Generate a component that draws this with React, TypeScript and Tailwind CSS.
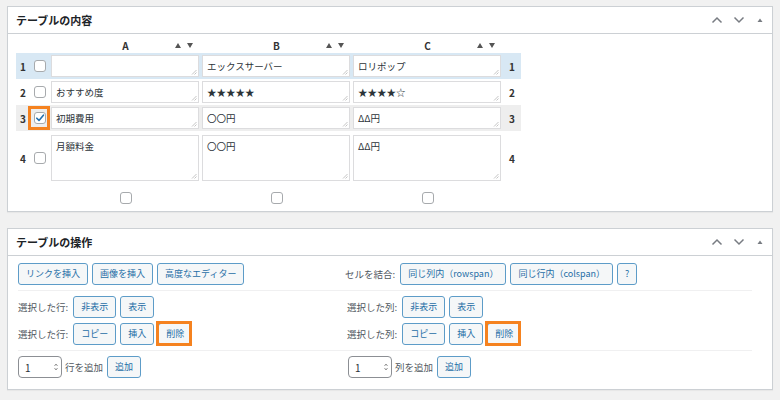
import React from "react";

const FONT = "font-['Noto_Sans_CJK_JP','Noto_Sans',sans-serif]";

function Box({ checked }: { checked?: boolean }) {
  return (
    <span className="w-[12px] h-[12px] rounded-[3px] border border-[#a7aaad] bg-white flex items-center justify-center shrink-0">
      {checked && (
        <svg width="10" height="10" viewBox="0 0 10 10">
          <path d="M1.8 5.2 L4 7.4 L8.4 2.2" fill="none" stroke="#2271b1" strokeWidth="1.6" strokeLinecap="round" strokeLinejoin="round" />
        </svg>
      )}
    </span>
  );
}

function Btn({ children }: { children: React.ReactNode }) {
  return (
    <span className="h-[22px] px-[7px] flex items-center border border-[#5d9cc8] rounded-[3px] bg-[#f5f7f8] text-[#1f6ea6] text-[9px] whitespace-nowrap shrink-0">
      {children}
    </span>
  );
}

// orange highlight drawn over the button
function Hot({ children }: { children: React.ReactNode }) {
  return (
    <span className="relative flex shrink-0">
      {children}
      <span className="absolute -left-[2px] -top-[2px] -bottom-[1px] right-0 border-[3px] border-[#f5821f]" />
    </span>
  );
}

function PanelHead({ title }: { title: string }) {
  return (
    <div className="h-[27px] border-b border-[#ccd0d4] flex items-center pl-[8px] pr-[8px]">
      <h2 className="text-[11px] font-semibold text-[#1d2327] flex-1">{title}</h2>
      <div className="flex items-center gap-[10px] text-[#787c82]">
        <svg width="12" height="8" viewBox="0 0 12 8">
          <path d="M1.5 6.5 L6 2 L10.5 6.5" fill="none" stroke="currentColor" strokeWidth="1.5" />
        </svg>
        <svg width="12" height="8" viewBox="0 0 12 8">
          <path d="M1.5 1.5 L6 6 L10.5 1.5" fill="none" stroke="currentColor" strokeWidth="1.5" />
        </svg>
        <svg width="8" height="8" viewBox="0 0 8 8" className="ml-[1px]">
          <path d="M1.5 6 L4 2.5 L6.5 6 Z" fill="currentColor" />
        </svg>
      </div>
    </div>
  );
}

function Sort() {
  return (
    <span className="flex items-center gap-[6px] pr-[8px] justify-self-end">
      <svg width="6" height="5" viewBox="0 0 6 5"><path d="M0 5 L3 0 L6 5 Z" fill="#555" /></svg>
      <svg width="6" height="5" viewBox="0 0 6 5"><path d="M0 0 L3 5 L6 0 Z" fill="#555" /></svg>
    </span>
  );
}

type Row = { n: number; cells: string[]; h: string; ta: string; band: string; checked?: boolean };

const rows: Row[] = [
  { n: 1, cells: ["", "エックスサーバー", "ロリポップ"], h: "h-[26px]", ta: "h-[22px]", band: "bg-[#d8e8f4]" },
  { n: 2, cells: ["おすすめ度", "★★★★★", "★★★★☆"], h: "h-[26px]", ta: "h-[22px]", band: "" },
  { n: 3, cells: ["初期費用", "〇〇円", "ΔΔ円"], h: "h-[26px]", ta: "h-[22px]", band: "bg-[#eeeeee]", checked: true },
  { n: 4, cells: ["月額料金", "〇〇円", "ΔΔ円"], h: "h-[54px]", ta: "h-[46px]", band: "" },
];

function Cell({ value, ta }: { value: string; ta: string }) {
  return (
    <div className="w-[151px] shrink-0">
      <div className={`relative ml-[1px] w-[148px] ${ta}`}>
        <textarea
          readOnly
          defaultValue={value}
          className="block w-full h-full resize-none border border-[#dcdcde] bg-white px-[4px] py-[3px] text-[9.5px] leading-[14px] text-[#2c3338] outline-none"
        />
        <svg width="6" height="6" viewBox="0 0 6 6" className="absolute right-[2px] bottom-[2px]">
          <path d="M1 5.5 L5.5 1 M3.5 5.5 L5.5 3.5" stroke="#b5b5b5" strokeWidth="0.8" />
        </svg>
      </div>
    </div>
  );
}

function ContentTable() {
  return (
    <div className="pl-[8px] pt-[3px]">
      <div className="flex h-[16px] items-center">
        <div className="w-[34px]" />
        {["A", "B", "C"].map((c) => (
          <div key={c} className="w-[151px] grid grid-cols-[1fr_auto_1fr] items-center">
            <span />
            <span className="text-[10px] font-bold text-[#333]">{c}</span>
            <Sort />
          </div>
        ))}
      </div>
      {rows.map((r) => (
        <div key={r.n} className={`flex items-center w-[505px] ${r.h} ${r.band}`}>
          <span className="w-[14px] text-center text-[10px] font-bold text-[#333]">{r.n}</span>
          <span className="relative w-[20px] flex justify-center">
            <Box checked={r.checked} />
            {r.checked && (
              <span className="absolute left-[-2px] top-[-6px] w-[22px] h-[24px] border-[3px] border-[#f5821f]" />
            )}
          </span>
          {r.cells.map((v, i) => (
            <Cell key={i} value={v} ta={r.ta} />
          ))}
          <span className="w-[18px] text-center text-[10px] font-bold text-[#333]">{r.n}</span>
        </div>
      ))}
      <div className="flex items-center h-[26px]">
        <div className="w-[34px]" />
        {[0, 1, 2].map((i) => (
          <div key={i} className="w-[151px] flex justify-center">
            <Box />
          </div>
        ))}
      </div>
    </div>
  );
}

function NumInput() {
  return (
    <span className="w-[44px] h-[22px] border border-[#8c8f94] rounded-[4px] bg-white flex items-center pl-[6px] pr-[3px] text-[10px] text-[#2c3338] shrink-0">
      <span className="flex-1">1</span>
      <svg width="4" height="8" viewBox="0 0 4 8">
        <path d="M0.5 3 L2 1 L3.5 3 M0.5 5 L2 7 L3.5 5" fill="none" stroke="#777" strokeWidth="0.8" />
      </svg>
    </span>
  );
}

function Label({ children }: { children: React.ReactNode }) {
  return <span className="text-[9.5px] text-[#50575e] mr-[1px] whitespace-nowrap">{children}</span>;
}

function Operations() {
  return (
    <div className="pl-[10px] pr-[20px] pt-[7px] pb-[11px] text-[9px]">
      <div className="grid grid-cols-[327px_1fr] border-b border-[#f0f0f1] pb-[5px]">
        <div className="flex gap-[4px]">
          <Btn>リンクを挿入</Btn>
          <Btn>画像を挿入</Btn>
          <Btn>高度なエディター</Btn>
        </div>
        <div className="flex items-center gap-[4px]">
          <Label>セルを結合:</Label>
          <Btn>同じ列内（rowspan）</Btn>
          <Btn>同じ行内（colspan）</Btn>
          <Btn>?</Btn>
        </div>
      </div>
      <div className="grid grid-cols-[327px_1fr] pt-[5px]">
        <div className="flex items-center gap-[4px]">
          <Label>選択した行:</Label>
          <Btn>非表示</Btn>
          <Btn>表示</Btn>
        </div>
        <div className="flex items-center gap-[4px] pl-[2px]">
          <Label>選択した列:</Label>
          <Btn>非表示</Btn>
          <Btn>表示</Btn>
        </div>
      </div>
      <div className="grid grid-cols-[327px_1fr] pt-[5px] border-b border-[#f0f0f1] pb-[5px]">
        <div className="flex items-center gap-[4px]">
          <Label>選択した行:</Label>
          <Btn>コピー</Btn>
          <Btn>挿入</Btn>
          <Hot>
            <Btn>削除</Btn>
          </Hot>
        </div>
        <div className="flex items-center gap-[4px] pl-[2px]">
          <Label>選択した列:</Label>
          <Btn>コピー</Btn>
          <Btn>挿入</Btn>
          <Hot>
            <Btn>削除</Btn>
          </Hot>
        </div>
      </div>
      <div className="grid grid-cols-[327px_1fr] pt-[5px]">
        <div className="flex items-center">
          <NumInput />
          <span className="ml-[3px] mr-[4px] text-[9.5px] text-[#50575e]">行を追加</span>
          <Btn>追加</Btn>
        </div>
        <div className="flex items-center pl-[3px]">
          <NumInput />
          <span className="ml-[3px] mr-[4px] text-[9.5px] text-[#50575e]">列を追加</span>
          <Btn>追加</Btn>
        </div>
      </div>
    </div>
  );
}

export default function App() {
  return (
    <div className={`w-[780px] h-[400px] overflow-hidden bg-[#f1f1f1] pt-[6px] pl-[7px] pr-[7px] ${FONT}`}>
      <div className="border border-[#ccd0d4] bg-white shadow-[0_1px_1px_rgba(0,0,0,0.04)]">
        <PanelHead title="テーブルの内容" />
        <ContentTable />
      </div>
      <div className="mt-[16px] border border-[#ccd0d4] bg-white shadow-[0_1px_1px_rgba(0,0,0,0.04)]">
        <PanelHead title="テーブルの操作" />
        <Operations />
      </div>
    </div>
  );
}
